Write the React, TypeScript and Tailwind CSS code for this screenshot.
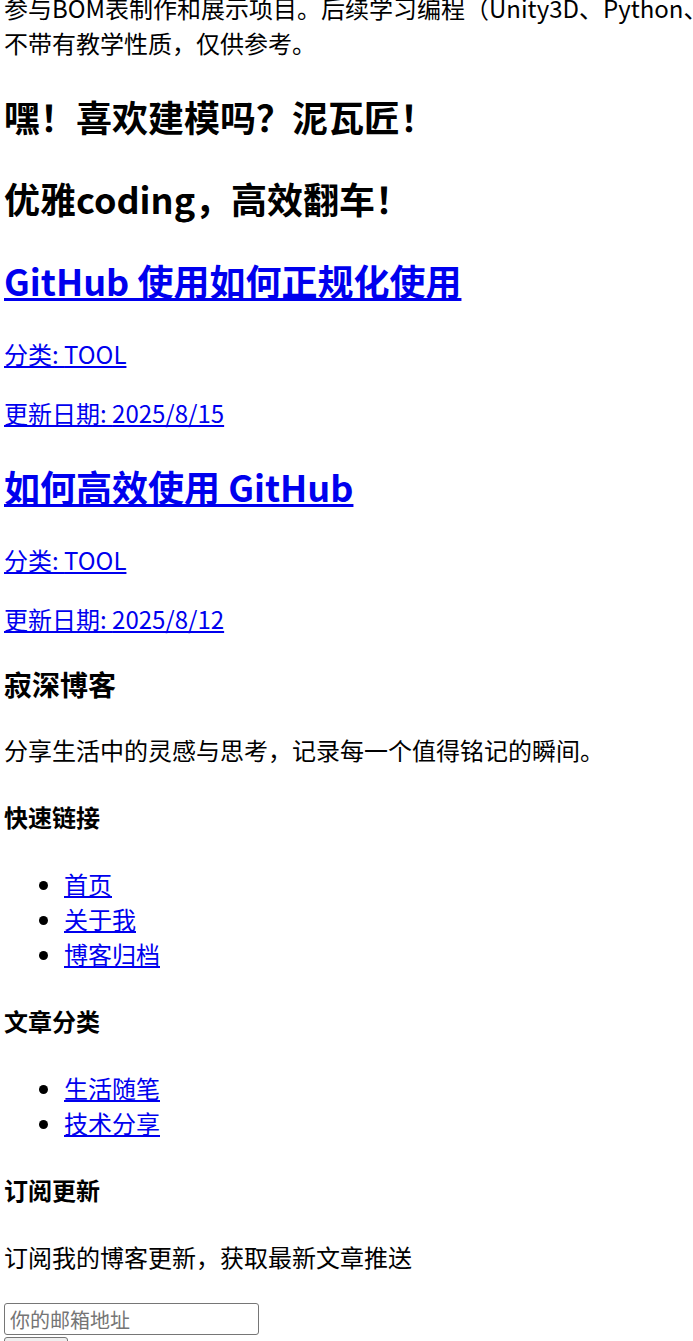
import React from 'react';

const posts = [
  { title: 'GitHub 使用如何正规化使用', category: 'TOOL', date: '2025/8/15' },
  { title: '如何高效使用 GitHub', category: 'TOOL', date: '2025/8/12' },
];

const quickLinks = ['首页', '关于我', '博客归档'];
const categories = ['生活随笔', '技术分享'];

const linkCls = 'text-[#0000ee] underline';

export default function App() {
  return (
    <div
      className="min-h-screen overflow-hidden bg-white pl-[4px] text-[24px] leading-[normal] text-black"
      style={{ fontFamily: '"Noto Sans CJK SC", "Noto Sans", sans-serif' }}
    >
      {/* 页面上方被滚走的简介段落 */}
      <p className="-mt-[10px] mb-[24px] whitespace-nowrap">
        参与BOM表制作和展示项目。后续学习编程（Unity3D、Python、
        <br />
        不带有教学性质，仅供参考。
      </p>

      <h2 className="my-[30px] text-[36px] font-bold">嘿！喜欢建模吗？泥瓦匠！</h2>
      <h2 className="my-[30px] text-[36px] font-bold">优雅coding，高效翻车！</h2>

      {posts.map((post) => (
        <article key={post.title}>
          <h2 className="my-[30px] text-[36px] font-bold">
            <a href="#" className={linkCls}>{post.title}</a>
          </h2>
          <p className="my-[24px]">
            <a href="#" className={linkCls}>分类: {post.category}</a>
          </p>
          <p className="my-[24px]">
            <a href="#" className={linkCls}>更新日期: {post.date}</a>
          </p>
        </article>
      ))}

      <footer>
        <h3 className="my-[28px] text-[28px] font-bold">寂深博客</h3>
        <p className="my-[28px]">分享生活中的灵感与思考，记录每一个值得铭记的瞬间。</p>

        <h4 className="my-[32px] text-[24px] font-bold">快速链接</h4>
        <ul className="my-[32px] list-disc pl-[60px]">
          {quickLinks.map((l) => (
            <li key={l}>
              <a href="#" className={linkCls}>{l}</a>
            </li>
          ))}
        </ul>

        <h4 className="my-[32px] text-[24px] font-bold">文章分类</h4>
        <ul className="my-[32px] list-disc pl-[60px]">
          {categories.map((c) => (
            <li key={c}>
              <a href="#" className={linkCls}>{c}</a>
            </li>
          ))}
        </ul>

        <h4 className="my-[32px] text-[24px] font-bold">订阅更新</h4>
        <p className="mt-[32px] mb-[24px]">订阅我的博客更新，获取最新文章推送</p>

        <form className="mt-[29px] flex flex-col items-start gap-[2px]">
          <input
            type="email"
            placeholder="你的邮箱地址"
            className="h-[32px] w-[255px] rounded-[3px] border border-[#767676] px-[5px] text-[20px] placeholder:text-[#757575]"
          />
          <button
            type="button"
            className="h-[34px] w-[64px] rounded-[3px] border border-[#767676] bg-[#efefef] text-[20px]"
          >
            订阅
          </button>
        </form>
      </footer>
    </div>
  );
}
